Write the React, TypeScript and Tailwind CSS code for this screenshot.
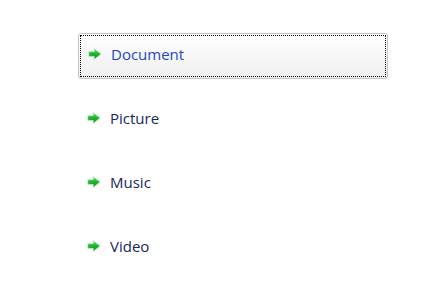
const items = ['Document', 'Picture', 'Music', 'Video'];

function Arrow() {
  return (
    <svg width="14" height="12" viewBox="0 0 14 12" className="shrink-0">
      <defs>
        <linearGradient id="ag" x1="0" y1="0" x2="0" y2="1">
          <stop offset="0" stopColor="#6fe07a" />
          <stop offset="0.5" stopColor="#19b52c" />
          <stop offset="1" stopColor="#0a8a1c" />
        </linearGradient>
      </defs>
      <path d="M0.8 3.6 H6.2 V0.6 L13.2 6 L6.2 11.4 V8.4 H0.8 Z" fill="url(#ag)" stroke="#c4efc8" strokeWidth="0.8" strokeLinejoin="round" />
    </svg>
  );
}

function CommandLink({label, active}: {label: string; active?: boolean}) {
  if (active) {
    return (
      <div className="w-[310px] h-[46px] rounded-[3px] border border-[#c4c4c4] bg-gradient-to-b from-white to-[#efefef] p-px">
        <div className="h-full border border-dotted border-black flex items-center gap-[9px] pl-[7px] pb-[4px]">
          <Arrow />
          <span className="text-[15px] leading-5 text-[#1c48c2]">{label}</span>
        </div>
      </div>
    );
  }
  return (
    <div className="w-[310px] h-[46px] flex items-center gap-[9px] pl-[9px] pb-[4px]">
      <Arrow />
      <span className="text-[15px] leading-5 text-[#1b1f5e]">{label}</span>
    </div>
  );
}

export default function App() {
  return (
    <div
      className="w-[448px] h-[300px] bg-white pl-[78px] pt-[33px] flex flex-col gap-[18px]"
      style={{fontFamily: '"Open Sans", "Noto Sans", sans-serif'}}>
      {items.map((label, i) => (
        <CommandLink key={label} label={label} active={i === 0} />
      ))}
    </div>
  );
}
